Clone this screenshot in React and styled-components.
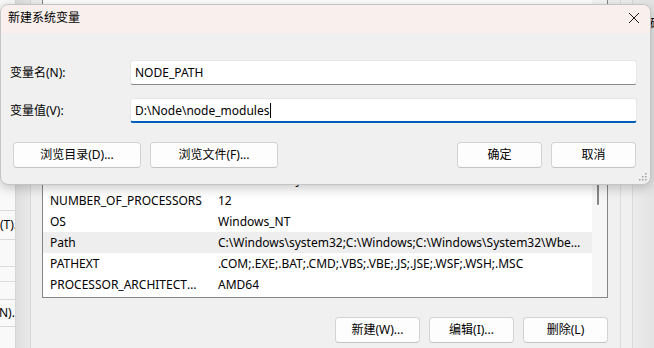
import React from "react";
import styled, { createGlobalStyle } from "styled-components";

const Global = createGlobalStyle`
  html, body { margin: 0; padding: 0; background: #e8e8e8; }
  body { font-family: "Noto Sans", "Noto Sans CJK SC", sans-serif; font-size: 12px; color: #000; }
  * { box-sizing: border-box; }
`;

const Page = styled.div`
  position: relative;
  width: 654px;
  height: 348px;
  overflow: hidden;
`;

const Backdrop = styled.div`
  display: flex;
  height: 100%;
`;

const SysStrip = styled.div`
  width: 16px;
  flex: none;
  background: #f9f9f9;
  border-right: 1px solid #d6d6d6;
  display: flex;
  flex-direction: column;
  padding-top: 210px;
  overflow: hidden;
`;

const SysButton = styled.div`
  height: ${(p) => p.$h}px;
  margin-top: ${(p) => p.$mt}px;
  width: 60px;
  margin-left: ${(p) => p.$ml}px;
  border-top: 1px solid #d9d9d9;
  border-bottom: 1px solid #d9d9d9;
  display: flex;
  align-items: center;
  white-space: nowrap;
  line-height: 1;
`;

const SysLine = styled.div`
  height: 1px;
  background: #dcdcdc;
  margin-top: ${(p) => p.$mt}px;
`;

const Shade = styled.div`
  width: 14px;
  flex: none;
  background: linear-gradient(to right, #dedede, #e9e9e9);
`;

const EnvWindow = styled.div`
  flex: none;
  width: 603px;
  background: #f0f0f0;
  border-left: 1px solid #d8d8d8;
  border-right: 1px solid #dadada;
  display: flex;
  padding-left: 11px;
`;

const EnvColumn = styled.div`
  width: 566px;
  display: flex;
  flex-direction: column;
`;

const List = styled.div`
  position: relative;
  height: 298px;
  background: #fff;
  border: 1px solid #858585;
  border-top: none;
  display: flex;
`;

const Rows = styled.div`
  flex: 1;
  padding-top: 1px;
  overflow: hidden;
  display: flex;
  flex-direction: column;
`;

const Row = styled.div`
  height: 21px;
  flex: none;
  display: grid;
  grid-template-columns: 168px 1fr;
  align-items: center;
  padding-left: 7px;
  background: ${(p) => (p.$selected ? "#eeeeee" : "transparent")};
  white-space: nowrap;
`;

const Cell = styled.span`
  overflow: hidden;
  text-overflow: ellipsis;
  padding-right: ${(p) => (p.$first ? 14 : 6)}px;
  line-height: 21px;
`;

const Scrollbar = styled.div`
  position: relative;
  width: 15px;
  flex: none;
  background: #f6f6f6;
`;

const Thumb = styled.div`
  position: absolute;
  left: 5px;
  top: 181px;
  width: 2px;
  height: 24px;
  border-radius: 1px;
  background: #868686;
`;

const EnvButtons = styled.div`
  display: flex;
  justify-content: flex-end;
  gap: 9px;
  margin-top: 19px;
`;

const Button = styled.div`
  width: ${(p) => p.$w}px;
  height: 26px;
  flex: none;
  background: #fdfdfd;
  border: 1px solid #d3d3d3;
  border-bottom-color: #c4c4c4;
  border-radius: 4px;
  display: flex;
  align-items: center;
  justify-content: center;
  line-height: 1;
  white-space: nowrap;
`;

const RightRail = styled.div`
  flex: 1;
  border-left: 1px solid #dcdcdc;
  margin-left: 12px;
`;

const Outer = styled.div`
  flex: 1;
  background: linear-gradient(to right, #ececec, #e3e3e3);
  overflow: hidden;
  padding-top: 14px;
  padding-left: 17px;
  white-space: nowrap;
`;

/* ---- foreground dialog ---- */

const Dialog = styled.div`
  position: absolute;
  left: 0;
  top: 4px;
  width: 651px;
  height: 181px;
  border: 1px solid #c4c4c4;
  border-radius: 8px;
  background: #f0f0f0;
  box-shadow: 0 3px 12px rgba(0, 0, 0, 0.22);
  overflow: hidden;
  display: flex;
  flex-direction: column;
`;

const TitleBar = styled.div`
  height: 28px;
  flex: none;
  background: #f9efed;
  display: flex;
  align-items: center;
  justify-content: space-between;
  padding: 0 9px 0 7px;
`;

const Title = styled.span`
  font-size: 12px;
  line-height: 1;
  padding-bottom: 2px;
`;

const Close = styled.div`
  width: 12px;
  height: 12px;
  display: flex;
  margin-right: 1px;
  margin-bottom: 2px;
`;

const Body = styled.div`
  flex: 1;
  display: flex;
  flex-direction: column;
  padding: 27px 13px 0 9px;
`;

const FieldRow = styled.div`
  display: flex;
  align-items: center;
  margin-bottom: ${(p) => p.$mb}px;
`;

const Label = styled.span`
  width: 120px;
  flex: none;
  line-height: 1;
`;

const Field = styled.div`
  flex: 1;
  height: 25px;
  background: #fff;
  border: 1px solid #e6e6e6;
  border-bottom: ${(p) => (p.$focused ? "2px solid #005fb8" : "1px solid #8a8a8a")};
  border-radius: 3px;
  display: flex;
  align-items: center;
  padding: ${(p) => (p.$focused ? "1px 0 0 4px" : "0 0 0 4px")};
  line-height: 1;
  white-space: nowrap;
`;

const Caret = styled.span`
  display: inline-block;
  width: 1px;
  height: 15px;
  background: #000;
  margin-left: 1px;
`;

const DialogButtons = styled.div`
  display: flex;
  align-items: center;
  gap: 9px;
  padding-left: 3px;
  padding-right: 1px;
  margin-top: 6px;
`;

const Spacer = styled.div`
  flex: 1;
`;

const Grip = styled.svg`
  position: absolute;
  right: 3px;
  bottom: 3px;
`;

const envRows = [
  ["ComSpec", "C:\\WINDOWS\\system32\\cmd.exe"],
  ["CommonFiles", "C:\\Program Files\\Common Files"],
  ["JAVA_HOME", "C:\\Program Files\\Java\\jdk-17"],
  ["MAVEN_HOME", "D:\\apache-maven"],
  ["NODE_HOME", "D:\\Node"],
  ["NodeCache", "D:\\Node\\node_cache"],
  ["NodeGlobal", "D:\\Node\\node_global"],
  ["NodeLogs", "D:\\Node\\logs"],
  ["DriverData", "C:\\Windows\\System32\\Drivers\\DriverData"],
  ["NUMBER_OF_PROCESSORS", "12"],
  ["OS", "Windows_NT"],
  ["Path", "C:\\Windows\\system32;C:\\Windows;C:\\Windows\\System32\\Wbem;C:\\Windows\\System32\\WindowsPowerShell"],
  ["PATHEXT", ".COM;.EXE;.BAT;.CMD;.VBS;.VBE;.JS;.JSE;.WSF;.WSH;.MSC"],
  ["PROCESSOR_ARCHITECTURE", "AMD64"],
];

export default function App() {
  return (
    <Page>
      <Global />
      <Backdrop>
        <SysStrip>
          <SysButton $h={30} $mt={0} $ml={0}>(T)...</SysButton>
          <SysLine $mt={26} />
          <SysLine $mt={14} />
          <SysButton $h={28} $mt={17} $ml={-1}>N)...</SysButton>
        </SysStrip>
        <Shade />
        <EnvWindow>
          <EnvColumn>
            <List>
              <Rows>
                {envRows.map(([k, v], i) => (
                  <Row key={i} $selected={k === "Path"}>
                    <Cell $first>{k}</Cell>
                    <Cell>{v}</Cell>
                  </Row>
                ))}
              </Rows>
              <Scrollbar>
                <Thumb />
              </Scrollbar>
            </List>
            <EnvButtons>
              <Button $w={85}>新建(W)...</Button>
              <Button $w={85}>编辑(I)...</Button>
              <Button $w={85}>删除(L)</Button>
            </EnvButtons>
          </EnvColumn>
          <RightRail />
        </EnvWindow>
        <Outer>码</Outer>
      </Backdrop>

      <Dialog>
        <TitleBar>
          <Title>新建系统变量</Title>
          <Close>
            <svg width="12" height="12" viewBox="0 0 12 12">
              <path d="M1 1 L11 11 M11 1 L1 11" stroke="#1a1a1a" strokeWidth="1" fill="none" />
            </svg>
          </Close>
        </TitleBar>
        <Body>
          <FieldRow $mb={13}>
            <Label>变量名(N):</Label>
            <Field>NODE_PATH</Field>
          </FieldRow>
          <FieldRow $mb={13}>
            <Label>变量值(V):</Label>
            <Field $focused>
              D:\Node\node_modules
              <Caret />
            </Field>
          </FieldRow>
          <DialogButtons>
            <Button $w={128}>浏览目录(D)...</Button>
            <Button $w={128}>浏览文件(F)...</Button>
            <Spacer />
            <Button $w={85}>确定</Button>
            <Button $w={85}>取消</Button>
          </DialogButtons>
        </Body>
        <Grip width="9" height="9" viewBox="0 0 9 9">
          {[
            [7, 1],
            [4, 4],
            [7, 4],
            [1, 7],
            [4, 7],
            [7, 7],
          ].map(([x, y], i) => (
            <rect key={i} x={x} y={y} width="1.5" height="1.5" fill="#a0a0a0" />
          ))}
        </Grip>
      </Dialog>
    </Page>
  );
}
